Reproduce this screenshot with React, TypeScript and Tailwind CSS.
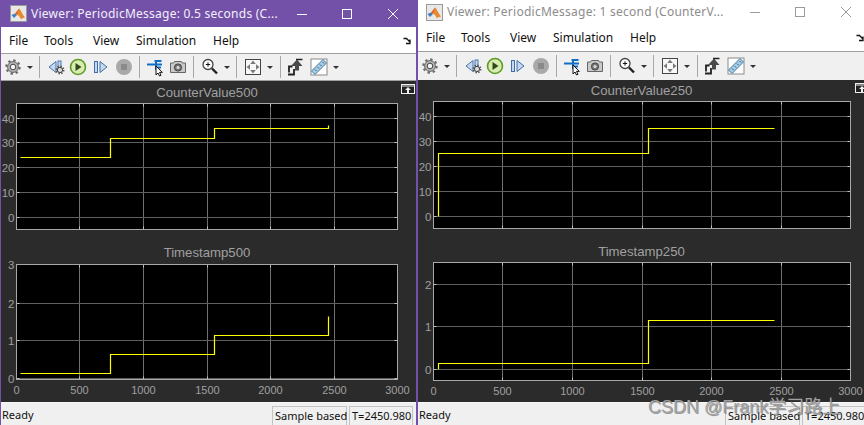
import React from "react"

const UI = "font-['Noto_Sans','Open_Sans',sans-serif]"

function Gear() {
  return (
    <svg width="20" height="20" viewBox="0 0 20 20">
      <circle cx="10" cy="10" r="6.6" fill="none" stroke="#6b6b6b" strokeWidth="2.2" strokeDasharray="2.4 2.78" />
      <circle cx="10" cy="10" r="5.4" fill="#b5b5b5" stroke="#666" strokeWidth="1" />
      <circle cx="10" cy="10" r="2.8" fill="#f4f4f4" stroke="#444" strokeWidth="1" />
    </svg>
  )
}

function Caret() {
  return (
    <svg width="8" height="20" viewBox="0 0 8 20">
      <path d="M1 9h6l-3 3z" fill="#333" />
    </svg>
  )
}

function Sep() {
  return <div className="h-[22px] w-px bg-[#a8a8a8]" />
}

function StepBack() {
  return (
    <svg width="20" height="20" viewBox="0 0 20 20">
      <path d="M9 4.500v11L2 10z" fill="#c5d8f0" stroke="#4a74a8" strokeWidth="1" />
      <rect x="11" y="4" width="3" height="9" fill="#c5d8f0" stroke="#4a74a8" strokeWidth="1" />
      <circle cx="13" cy="13" r="3.600" fill="none" stroke="#555" strokeWidth="1.800" strokeDasharray="1.500 1.300" />
      <circle cx="13" cy="13" r="2.600" fill="#ddd" stroke="#444" strokeWidth="1" />
    </svg>
  )
}

function Play() {
  return (
    <svg width="20" height="20" viewBox="0 0 20 20">
      <circle cx="10" cy="10" r="7.500" fill="#d9ecb0" stroke="#5f9a26" strokeWidth="1.600" />
      <path d="M7.500 6v8l6-4z" fill="#2f4a18" />
    </svg>
  )
}

function StepForward() {
  return (
    <svg width="20" height="20" viewBox="0 0 20 20">
      <rect x="3.500" y="4.500" width="3" height="11" fill="#c5d8f0" stroke="#3f6ea8" strokeWidth="1" />
      <path d="M9 4.500v11l7-5.500z" fill="#c5d8f0" stroke="#3f6ea8" strokeWidth="1" />
    </svg>
  )
}

function Stop() {
  return (
    <svg width="20" height="20" viewBox="0 0 20 20">
      <circle cx="10" cy="10" r="8" fill="#a9a9a9" />
      <rect x="7" y="7" width="6" height="6" fill="#8a8a8a" />
    </svg>
  )
}

function CursorTool() {
  return (
    <svg width="20" height="20" viewBox="0 0 20 20">
      <path d="M2 7.500h15M9.500 4h7M11 4v9M11 10.500h5" fill="none" stroke="#0f6fc6" strokeWidth="2" />
      <path d="M11 9v9l2-2 1.500 3 1.500-.8-1.500-2.800h2.800z" fill="#fff" stroke="#111" strokeWidth="1" />
    </svg>
  )
}

function Camera() {
  return (
    <svg width="20" height="20" viewBox="0 0 20 20">
      <path d="M2.500 6h3l1-1.500h7l1 1.500h3v9.500h-15z" fill="#c9c9c9" stroke="#666" strokeWidth="1" />
      <circle cx="10" cy="10.500" r="3.600" fill="#777" stroke="#444" strokeWidth="1" />
      <circle cx="10" cy="10.500" r="1.500" fill="#ddd" />
    </svg>
  )
}

function Zoom() {
  return (
    <svg width="20" height="20" viewBox="0 0 20 20">
      <circle cx="8" cy="7.500" r="5" fill="#fff" stroke="#444" strokeWidth="1.300" />
      <path d="M5.800 7.500h4.400M8 5.300v4.400" stroke="#111" strokeWidth="1" />
      <path d="M12 11.500l5 5" stroke="#222" strokeWidth="2.400" />
    </svg>
  )
}

function Fit() {
  return (
    <svg width="20" height="20" viewBox="0 0 20 20">
      <rect x="2.500" y="2.500" width="15" height="15" fill="#f8f8f8" stroke="#444" strokeWidth="1" />
      <path d="M10 3.500l2.800 3.500h-5.600zM10 16.500l2.800-3.500h-5.600zM3.500 10l3.500-2.800v5.600zM16.500 10l-3.500-2.800v5.600z" fill="#7a7a7a" />
    </svg>
  )
}

function StepArrow() {
  return (
    <svg width="20" height="20" viewBox="0 0 20 20">
      <path d="M3 17.500h6v-5.500" fill="none" stroke="#222" strokeWidth="1.800" />
      <path d="M4 15.500V9.500h3.500" fill="none" stroke="#222" strokeWidth="1.800" />
      <path d="M6 9l6-6.500L17.500 9H14v4.500H10V9z" fill="#4a4a4a" />
      <path d="M11 2.500h6.500" stroke="#222" strokeWidth="1.500" />
    </svg>
  )
}

function Ruler() {
  return (
    <svg width="20" height="20" viewBox="0 0 20 20">
      <rect x="2" y="2" width="16" height="16" fill="#fff" stroke="#8a8a8a" strokeWidth="1" />
      <path d="M2.500 14l11.500-11.500 3.500 3.500-11.500 11.500z" fill="#a5cde6" stroke="#4a7a9c" strokeWidth="1" />
      <path d="M6 12.500l1.500 1.500M8.500 10l1.500 1.500M11 7.500l1.500 1.500M13.500 5l1.500 1.500" stroke="#2f5f80" strokeWidth="1" />
    </svg>
  )
}

function Toolbar({ tall }: { tall?: boolean }) {
  return (
    <div
      className={
        "flex items-center border-y border-[#a0a0a0] bg-[#f0f0f0] pl-[2px] " + (tall ? "h-[29px] border-b-0" : "h-[28px]")
      }
    >
      <Gear />
      <div className="ml-[3px]"><Caret /></div>
      <div className="ml-[5px]"><Sep /></div>
      <div className="ml-[7px]"><StepBack /></div>
      <div className="ml-px"><Play /></div>
      <div className="ml-[3px]"><StepForward /></div>
      <div className="ml-[3px]"><Stop /></div>
      <div className="ml-[5px]"><Sep /></div>
      <div className="ml-[5px]"><CursorTool /></div>
      <div className="ml-[3px]"><Camera /></div>
      <div className="ml-[5px]"><Sep /></div>
      <div className="ml-[6px]"><Zoom /></div>
      <div className="ml-[3px]"><Caret /></div>
      <div className="ml-[5px]"><Sep /></div>
      <div className="ml-[6px]"><Fit /></div>
      <div className="ml-[3px]"><Caret /></div>
      <div className="ml-[6px]"><Sep /></div>
      <div className="ml-[4px]"><StepArrow /></div>
      <div className="ml-[4px]"><Ruler /></div>
      <div className="ml-[3px]"><Caret /></div>
    </div>
  )
}

function MatlabLogo() {
  return (
    <svg width="17" height="17" viewBox="0 0 17 17" className="shrink-0">
      <rect x="0.500" y="0.500" width="16" height="16" fill="#e8e8e8" stroke="#9a9a9a" strokeWidth="1" />
      <path d="M1.500 10l3.500-1.500 2 1.500-3 3z" fill="#3f7fbf" />
      <path d="M5 8.500l4-5 2 3-4 3.500z" fill="#d9642a" />
      <path d="M9 3.500c1.500 1 3.500 6 6 9-2 .5-3.500 1-4 2-1-2.500-2.500-4.500-4-4.500z" fill="#e88a2e" />
    </svg>
  )
}

function WindowButtons({ color }: { color: string }) {
  return (
    <div className="ml-auto flex h-full">
      <div className="flex w-[45px] items-center justify-center">
        <svg width="12" height="12" viewBox="0 0 12 12">
          <path d="M1 6.500h10" stroke={color} strokeWidth="1" />
        </svg>
      </div>
      <div className="flex w-[46px] items-center justify-center">
        <svg width="12" height="12" viewBox="0 0 12 12">
          <rect x="1.500" y="1.500" width="9" height="9" fill="none" stroke={color} strokeWidth="1" />
        </svg>
      </div>
      <div className="flex w-[46px] items-center justify-center">
        <svg width="12" height="12" viewBox="0 0 12 12">
          <path d="M1 1l10 10M11 1L1 11" stroke={color} strokeWidth="1" />
        </svg>
      </div>
    </div>
  )
}

type Trace = [number, number][]

type ScopeProps = {
  title: string
  titleBox: string
  left: number
  top: number
  width: number
  height: number
  box: { x0: number; x1: number; y0: number; y1: number }
  xGrid: number[]
  yGrid: { y: number; label: string }[]
  trace: Trace
  xLabels?: boolean
  labelRight: number
}

function Scope({ title, titleBox, left, top, width, height, box, xGrid, yGrid, trace, xLabels, labelRight }: ScopeProps) {
  const labels = ["0", "500", "1000", "1500", "2000", "2500", "3000"]
  const xs = [box.x0, ...xGrid, box.x1]
  return (
    <>
      <div className={"flex items-center justify-center text-[13.2px] text-[#a0a0a0] font-['Liberation_Sans',sans-serif] " + titleBox}>
        {title}
      </div>
      <svg
        width={width}
        height={height}
        viewBox={`${left} ${top} ${width} ${height}`}
        className="shrink-0 overflow-visible font-['Liberation_Sans',sans-serif]"
      >
        <rect x={box.x0} y={box.y0} width={box.x1 - box.x0} height={box.y1 - box.y0} fill="#000" />
        {xGrid.map((x) => (
          <path key={x} d={`M${x} ${box.y0}V${box.y1}`} stroke="#6f6f6f" strokeWidth="1" />
        ))}
        {yGrid.map((g) => (
          <path key={g.label} d={`M${box.x0} ${g.y}H${box.x1}`} stroke="#5f5f5f" strokeWidth="1" />
        ))}
        {xGrid.map((x) => (
          <path key={x} d={`M${x} ${box.y0}v3M${x} ${box.y1}v-3`} stroke="#c0c0c0" strokeWidth="1" />
        ))}
        {yGrid.map((g) => (
          <path key={g.label} d={`M${box.x0} ${g.y}h3M${box.x1} ${g.y}h-3`} stroke="#c0c0c0" strokeWidth="1" />
        ))}
        <rect
          x={box.x0}
          y={box.y0}
          width={box.x1 - box.x0}
          height={box.y1 - box.y0}
          fill="none"
          stroke="#a8a8a8"
          strokeWidth="1"
        />
        <polyline points={trace.map((p) => p.join(",")).join(" ")} fill="none" stroke="#ffff00" strokeWidth="1.200" />
        {yGrid.map((g) => (
          <text key={g.label} x={labelRight} y={g.y + 4.5} textAnchor="end" fontSize="11.500" fill="#a0a0a0">
            {g.label}
          </text>
        ))}
        {xLabels &&
          xs.map((x, i) => (
            <text key={x} x={x} y={box.y1 + 14.5} textAnchor="middle" fontSize="11" fill="#a0a0a0">
              {labels[i]}
            </text>
          ))}
      </svg>
    </>
  )
}

function PopoutIcon() {
  return (
    <svg width="14" height="10" viewBox="0 0 14 10">
      <rect x="0.500" y="0.500" width="13" height="9" fill="#222" stroke="#eee" strokeWidth="1" />
      <path d="M1 2h12" stroke="#eee" strokeWidth="1" />
      <path d="M7 3l3 3H8v3H6V6H4z" fill="#eee" />
    </svg>
  )
}

function DockArrow() {
  return (
    <svg width="8" height="8" viewBox="0 0 8 8">
      <path d="M0.500 1.500h3l3.500 3.500M7 2.500V6.500H3" fill="none" stroke="#111" strokeWidth="1.300" />
    </svg>
  )
}

function Menu({ className }: { className: string }) {
  return (
    <div className={"relative flex items-center bg-white pl-[8px] text-[12px] text-[#111] " + UI + " " + className}>
      <span className="w-[35px]">File</span>
      <span className="w-[49px]">Tools</span>
      <span className="w-[43px]">View</span>
      <span className="w-[77px]">Simulation</span>
      <span>Help</span>
      <div className="ml-auto mr-[5px]">
        <DockArrow />
      </div>
    </div>
  )
}

function Status() {
  return (
    <div className={"flex h-[23px] shrink-0 items-end whitespace-nowrap border-t border-[#f8f8f8] bg-[#f0f0f0] pl-px pr-[3px] text-[11px] text-[#111] " + UI}>
      <span className="mb-[1px] h-[18px] leading-[18px]">Ready</span>
      <div className="ml-auto flex gap-[2px]">
        <div className="h-[19px] w-[75px] border-x border-t border-[#c4c4c4] pl-[2px] leading-[18px]">Sample based</div>
        <div className="h-[19px] w-[64px] border-x border-t border-[#c4c4c4] pl-[2px] leading-[18px]">T=2450.980</div>
      </div>
    </div>
  )
}

export default function App() {
  const leftX = [79.5, 143.5, 207.5, 270.5, 334.5]
  const rightX = [502.5, 572.5, 642.5, 711.5, 781.5]
  return (
    <div className="relative flex h-[425px] w-[864px] overflow-hidden bg-[#2b2b2b]">
      <div className="flex h-full w-[418px] shrink-0 flex-col border-l border-r-2 border-[#7351a9]">
        <div className={"flex h-[27px] shrink-0 items-center bg-[#7351a9] pl-[9px] text-[12px] tracking-[0.25px] text-[#f4f0fa] " + UI}>
          <MatlabLogo />
          <span className="ml-[4px] whitespace-nowrap">Viewer: PeriodicMessage: 0.5 seconds (C...</span>
          <WindowButtons color="#ffffff" />
        </div>
        <Menu className="h-[26px] shrink-0 pt-px" />
        <Toolbar />
        <div className="relative flex min-h-0 flex-1 flex-col bg-[#2b2b2b]">
          <div className="absolute right-[1px] top-[3px]">
            <PopoutIcon />
          </div>
          <Scope
            title="CounterValue500"
            titleBox="h-[22px] w-[382px] ml-[15px] pt-[2px]"
            left={1}
            top={103}
            width={415}
            height={129}
            box={{ x0: 16.5, x1: 397.5, y0: 103.5, y1: 229.5 }}
            xGrid={leftX}
            yGrid={[
              { y: 118.5, label: "40" },
              { y: 142.5, label: "30" },
              { y: 167.5, label: "20" },
              { y: 192.5, label: "10" },
              { y: 217.5, label: "0" },
            ]}
            trace={[[20.5, 157.5], [110.5, 157.5], [110.5, 138.5], [214.5, 138.5], [214.5, 128.5], [328.5, 128.5], [328.5, 125.5]]}
            labelRight={14.5}
          />
          <Scope
            title="Timestamp500"
            titleBox="h-[32px] w-[382px] ml-[15px] pt-[10px]"
            left={1}
            top={264}
            width={415}
            height={138}
            box={{ x0: 16.5, x1: 397.5, y0: 264.5, y1: 379.5 }}
            xGrid={leftX}
            yGrid={[
              { y: 264.5, label: "3" },
              { y: 303.5, label: "2" },
              { y: 340.5, label: "1" },
              { y: 378.5, label: "0" },
            ]}
            trace={[[20.5, 373.5], [110.5, 373.5], [110.5, 354.5], [214.5, 354.5], [214.5, 335.5], [328.5, 335.5], [328.5, 316.5]]}
            xLabels
            labelRight={14.5}
          />
        </div>
        <Status />
      </div>

      <div className="flex h-full w-[451px] shrink-0 flex-col">
        <div className={"flex h-[24px] shrink-0 items-center bg-white pl-[8px] text-[12px] tracking-[0.25px] text-[#8c8c8c] " + UI}>
          <MatlabLogo />
          <span className="ml-[4px] whitespace-nowrap">Viewer: PeriodicMessage: 1 second (CounterV...</span>
          <WindowButtons color="#9a9a9a" />
        </div>
        <Menu className="h-[27px] shrink-0" />
        <Toolbar tall />
        <div className="relative flex min-h-0 flex-1 flex-col bg-[#2b2b2b]">
          <div className="absolute right-[0px] top-[3px]">
            <PopoutIcon />
          </div>
          <Scope
            title="CounterValue250"
            titleBox="h-[21px] w-[417px] ml-[15px]"
            left={418}
            top={101}
            width={451}
            height={131}
            box={{ x0: 433.5, x1: 850.5, y0: 101.5, y1: 228.5 }}
            xGrid={rightX}
            yGrid={[
              { y: 116.5, label: "40" },
              { y: 141.5, label: "30" },
              { y: 166.5, label: "20" },
              { y: 191.5, label: "10" },
              { y: 216.5, label: "0" },
            ]}
            trace={[[438.5, 216.5], [438.5, 153.5], [648.5, 153.5], [648.5, 128.5], [774.5, 128.5]]}
            labelRight={431.5}
          />
          <Scope
            title="Timestamp250"
            titleBox="h-[30px] w-[417px] ml-[15px] pt-[10px]"
            left={418}
            top={262}
            width={451}
            height={140}
            box={{ x0: 433.5, x1: 850.5, y0: 262.5, y1: 380.5 }}
            xGrid={rightX}
            yGrid={[
              { y: 284.5, label: "2" },
              { y: 326.5, label: "1" },
              { y: 369.5, label: "0" },
            ]}
            trace={[[438.5, 369.5], [438.5, 363.5], [648.5, 363.5], [648.5, 320.5], [774.5, 320.5]]}
            xLabels
            labelRight={431.5}
          />
        </div>
        <Status />
      </div>

      <div className="absolute left-[648px] top-[396px] whitespace-nowrap text-[18px] leading-[22px] text-[#a0a0a0] [text-shadow:1px_1px_0_rgba(70,70,70,0.5)] font-['Liberation_Sans','Noto_Sans_CJK_SC',sans-serif]">
        CSDN @Frank学习路上
      </div>
    </div>
  )
}
